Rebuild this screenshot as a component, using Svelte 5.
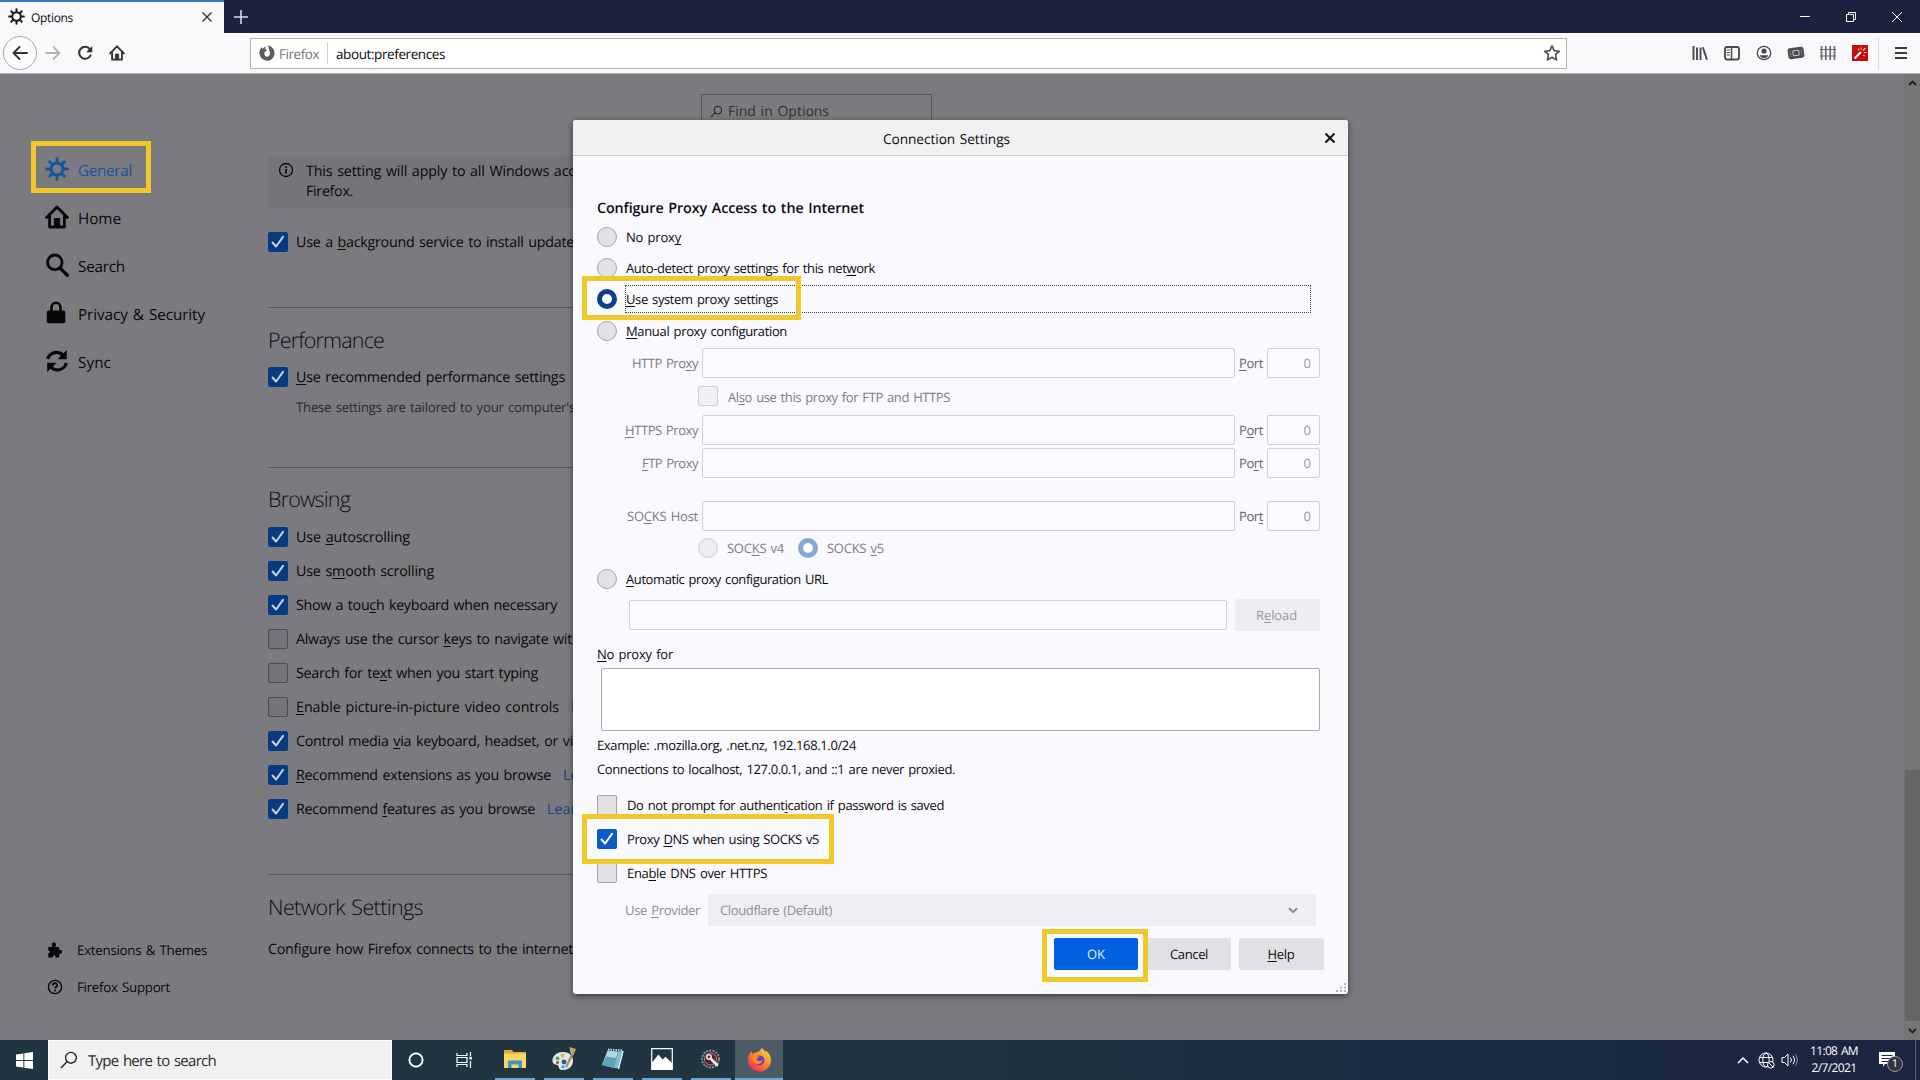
<script>
  // Labels carry a "~" in front of their access key letter.
  const split = (s) => {
    const i = s.indexOf('~');
    return i < 0 ? [s, '', ''] : [s.slice(0, i), s[i + 1], s.slice(i + 2)];
  };

  // Tracks a label so that it fills its design width exactly.
  function fit(node, width) {
    const natural = node.getBoundingClientRect().width;
    const gaps = Math.max(1, node.textContent.length);
    node.style.letterSpacing = `${(width - natural) / gaps}px`;
  }

  const nav = [
    { icon: 'gear', text: 'General', w: 54, active: true },
    { icon: 'home', text: 'Home', w: 43 },
    { icon: 'search', text: 'Search', w: 47 },
    { icon: 'lock', text: 'Privacy & Security', w: 127 },
    { icon: 'sync', text: 'Sync', w: 33 }
  ];

  const browsing = [
    { text: 'Use ~autoscrolling', w: 114, on: true },
    { text: 'Use s~mooth scrolling', w: 138, on: true },
    { text: 'Show a tou~ch keyboard when necessary', w: 261, on: true },
    { text: 'Always use the cursor ~keys to navigate wit', w: 276, on: false },
    { text: 'Search for te~xt when you start typing', w: 242, on: false },
    { text: '~Enable picture-in-picture video controls', w: 263, on: false, link: 'L' },
    { text: 'Control media ~via keyboard, headset, or vi', w: 277, on: true },
    { text: '~Recommend extensions as you browse', w: 255, on: true, link: 'Le' },
    { text: 'Recommend ~features as you browse', w: 239, on: true, link: 'Lear' }
  ];

  const apps = ['explorer', 'paint', 'notepad', 'photos', 'tool', 'firefox'];
</script>

{#snippet t(label, w)}
  {@const p = split(label)}
  <span class="t" use:fit={w}>{p[0]}{#if p[1]}<u>{p[1]}</u>{/if}{p[2]}</span>
{/snippet}

{#snippet check(on, faded = false)}
  <span class="check" class:on class:faded>
    {#if on}
      <svg viewBox="0 0 20 20" width="20" height="20"><path d="M4.5 10.5l3.6 4L15 4.8" fill="none" stroke="currentColor" stroke-width="2" stroke-linecap="round" stroke-linejoin="round" /></svg>
    {/if}
  </span>
{/snippet}

{#snippet radio(on, faded = false)}
  <span class="radio" class:on class:faded></span>
{/snippet}

{#snippet gear(size)}
  <svg width={size} height={size} viewBox="0 0 24 24" fill="none" stroke="currentColor">
    <circle cx="12" cy="12" r="6" stroke-width="2.8" />
    <g stroke-width="2.8" stroke-linecap="round">
      {#each [0, 45, 90, 135, 180, 225, 270, 315] as a}
        <path d="M12 5V1.6" transform="rotate({a} 12 12)" />
      {/each}
    </g>
  </svg>
{/snippet}

{#snippet house(size)}
  <svg width={size} height={size} viewBox="0 0 24 24" fill="none" stroke="currentColor" stroke-width="2.8" stroke-linejoin="round" stroke-linecap="round">
    <path d="M1.6 12.6L12 2l10.4 10.6M4.6 11v11h14.8V11" />
    <path d="M9.400 21v-7.500h5.200v7.500z" fill="currentColor" stroke-width="1" />
  </svg>
{/snippet}

{#snippet proxyRow(label, w, port)}
  <div class="proxy">
    <span class="plabel">{@render t(label, w)}</span>
    <span class="field grow"></span>
    <span class="port">{@render t(port, 24)}</span>
    <span class="field num">0</span>
  </div>
{/snippet}

<div class="screen">
  <header class="titlebar">
    <div class="tab">
      <span class="tabicon">{@render gear(17)}</span>
      <span class="tabtext">{@render t('Options', 42)}</span>
      <svg class="tabclose" width="12" height="12" viewBox="0 0 12 12"><path d="M1.5 1.5l9 9M10.5 1.5l-9 9" stroke="#333" stroke-width="1.4" /></svg>
    </div>
    <svg class="plus" width="14" height="14" viewBox="0 0 14 14"><path d="M7 0v14M0 7h14" stroke="#d8dae6" stroke-width="1.6" /></svg>
    <div class="winctl">
      <svg width="46" height="32" viewBox="0 0 46 32"><path d="M18 15.5h10" stroke="#fff" /></svg>
      <svg width="46" height="32" viewBox="0 0 46 32"><path d="M18.5 13.5h7v7h-7zM20.500 13.500v-2h7v7h-2" fill="none" stroke="#fff" /></svg>
      <svg width="46" height="32" viewBox="0 0 46 32"><path d="M18 11l10 10M28 11L18 21" stroke="#fff" /></svg>
    </div>
  </header>

  <div class="toolbar">
    <div class="navbtns">
      <span class="back"><svg width="16" height="16" viewBox="0 0 16 16" fill="none" stroke="#333" stroke-width="1.9" stroke-linecap="round" stroke-linejoin="round"><path d="M15 8H1.500M7.500 2L1.500 8l6 6" /></svg></span>
      <svg class="ic fwd" width="16" height="16" viewBox="0 0 16 16" fill="none" stroke="#b3b3b6" stroke-width="1.8" stroke-linecap="round" stroke-linejoin="round"><path d="M1 8h13.500M8.500 2l6 6-6 6" /></svg>
      <svg class="ic" width="16" height="16" viewBox="0 0 16 16" fill="none" stroke="#333" stroke-width="2" stroke-linecap="round"><path d="M13.500 10.500A6 6 0 1 1 12.800 4" /><path d="M15.300 1v6.300H9z" fill="#333" stroke="none" /></svg>
      <span class="ic home">{@render house(16)}</span>
    </div>
    <div class="urlbar">
      <svg width="16" height="16" viewBox="0 0 16 16"><path d="M9 .4C12.900 1 15.600 4.300 15.600 8A7.600 7.600 0 0 1 .4 8.200C.4 5.500 1.300 3.600 2.800 2L3.400 4 6.500 1.200 6.300 4.400 8.600 5.200 6.400 6.600A2.800 2.800 0 1 0 10.900 8.600C11 6.500 9.900 5.600 9.800 3.600 9.700 2.500 9.500 1.400 9 .4z" fill="#5c5c60" /></svg>
      <span class="brand">{@render t('Firefox', 40)}</span>
      <span class="usep"></span>
      <span class="url">{@render t('about:preferences', 109)}</span>
      <svg class="star" width="18" height="18" viewBox="0 0 18 18"><path d="M9 1.800l2.200 4.800 5.200.6-3.900 3.500 1.100 5.200L9 13.300l-4.600 2.600 1.100-5.200-3.900-3.500 5.200-.6z" fill="none" stroke="#4a4a4f" stroke-width="1.600" stroke-linejoin="round" /></svg>
    </div>
    <div class="tools">
      <svg width="16" height="16" viewBox="0 0 16 16" stroke="#4a4a4f" stroke-width="1.900" fill="none"><path d="M1.500 1v14M5 2.500V15M8.500 2.500V15M10.800 2.300L15 14.800" /></svg>
      <svg width="16" height="16" viewBox="0 0 16 16" stroke="#4a4a4f" fill="none"><rect x="1" y="2" width="14" height="12.500" rx="2.200" stroke-width="1.900" /><path d="M7.500 2v12" stroke-width="1.500" /><path d="M2.800 5h3M2.800 7.500h3M2.800 10h3" /></svg>
      <svg width="16" height="16" viewBox="0 0 16 16" fill="none" stroke="#4a4a4f"><circle cx="8" cy="8" r="6.700" stroke-width="1.300" /><circle cx="8" cy="6" r="2.600" fill="#4a4a4f" stroke="none" /><path d="M3.800 10.200h8.400c-.6 2-2.200 3-4.200 3s-3.600-1-4.200-3z" fill="#4a4a4f" stroke="none" /></svg>
      <svg width="18" height="16" viewBox="0 0 18 16"><g transform="rotate(-8 9 8)"><rect x="1" y="2.500" width="16" height="11" rx="2.500" fill="#4a4a4f" /><rect x="6" y="5.500" width="6" height="5" rx="1" fill="none" stroke="#c8c8cc" /><path d="M3.500 5v6M14.500 5v6" stroke="#a0a0a5" stroke-dasharray="1.500 1" /></g></svg>
      <svg width="16" height="16" viewBox="0 0 16 16" stroke="#6b6b70" fill="none"><path d="M1.500 1v14M5.800 1v14M10.200 1v14M14.500 1v14" stroke-width="1.700" /><path d="M0 4.500h16M0 11h16" stroke-width="1.200" /></svg>
      <svg width="16" height="16" viewBox="0 0 16 16"><path d="M0 0h16v16H0z" fill="#c00d0d" /><path d="M2.500 13.500l6.500-6.500" stroke="#fff" stroke-width="2.200" /><path d="M9 2.500v2M11 5.500l2.500-2.500M12 7.500h2.300M6 4l1.200 1.200M11.500 10l1 1" stroke="#ffc2c2" stroke-width="1.100" /></svg>
      <span class="tsep"></span>
      <svg class="burger" width="12" height="14" viewBox="0 0 12 14"><path d="M0 2h12M0 7h12M0 12h12" stroke="#3c3c40" stroke-width="1.800" /></svg>
    </div>
  </div>

  <div class="page">
    <aside>
      <nav>
        {#each nav as n}
          <div class="navitem" class:active={n.active}>
            <span class="navicon">
              {#if n.icon === 'gear'}{@render gear(24)}
              {:else if n.icon === 'home'}{@render house(24)}
              {:else if n.icon === 'search'}
                <svg width="24" height="24" viewBox="0 0 24 24" fill="none" stroke="currentColor"><circle cx="9.800" cy="9.300" r="7.300" stroke-width="2.800" /><path d="M15 15l7.300 7.300" stroke-width="3.400" stroke-linecap="round" /></svg>
              {:else if n.icon === 'lock'}
                <svg width="24" height="24" viewBox="0 0 24 24"><path d="M6.500 11V6.300a4.500 4.500 0 0 1 9 0V11" fill="none" stroke="currentColor" stroke-width="2.600" /><rect x="1.800" y="9.500" width="18.500" height="12.800" rx="2" fill="currentColor" /></svg>
              {:else}
                <svg width="24" height="24" viewBox="0 0 24 24" fill="none" stroke="currentColor" stroke-width="3.200"><path d="M2.700 10A9 9 0 0 1 18.500 7M21.300 14A9 9 0 0 1 5.500 17.500" /><path d="M21.800 1v9.300h-9.300zM2.200 23v-9.300h9.300z" fill="currentColor" stroke="none" /></svg>
              {/if}
            </span>
            <span class="navtext">{@render t(n.text, n.w)}</span>
          </div>
        {/each}
      </nav>
      <div class="foot">
        <div class="footitem">
          <svg width="16" height="16" viewBox="0 0 16 16"><path d="M6.800.5a2 2 0 0 1 1.800 3.200V5h3.600v3a2 2 0 1 1 0 3.400V15.500H8.500c.6-2.600-3-2.600-2.600 0H1.300V11c2.300.6 2.300-2.600 0-2.200V5h3.800V3.700A2 2 0 0 1 6.800.5z" fill="currentColor" /></svg>
          {@render t('Extensions & Themes', 130)}
        </div>
        <div class="footitem">
          <svg width="16" height="16" viewBox="0 0 16 16" fill="none" stroke="currentColor"><circle cx="8" cy="8" r="6.600" stroke-width="1.400" /><path d="M5.700 6.500c0-3 4.600-2.900 4.600-.3 0 1.600-2.200 1.600-2.200 3.300" stroke-width="1.800" /><path d="M7.200 10.700h1.900v1.700H7.200z" fill="currentColor" stroke="none" /></svg>
          {@render t('Firefox Support', 93)}
        </div>
      </div>
    </aside>

    <main>
      <div class="findrow">
        <div class="find">
          <svg width="13" height="13" viewBox="0 0 14 14" fill="none" stroke="currentColor" stroke-width="1.300"><circle cx="8.500" cy="5.500" r="4" /><path d="M5.700 8.300L1 13" /></svg>
          {@render t('Find in Options', 101)}
        </div>
      </div>
      <div class="info">
        <svg width="16" height="16" viewBox="0 0 16 16" fill="none" stroke="currentColor"><circle cx="8" cy="8" r="6.500" stroke-width="1.300" /><path d="M8 7v4.500" stroke-width="1.700" /><circle cx="8" cy="4.900" r="1" fill="currentColor" stroke="none" /></svg>
        <div class="infotext">
          <div>{@render t('This setting will apply to all Windows acc', 269)}</div>
          <div>{@render t('Firefox.', 47)}</div>
        </div>
      </div>
      <div class="opt bgservice">{@render check(true)}<span class="lab">{@render t('Use a ~background service to install update', 278)}</span></div>
      <hr class="hr1" />
      <h2>{@render t('Performance', 116)}</h2>
      <div class="opt perf">{@render check(true)}<span class="lab">{@render t('~Use recommended performance settings', 269)}</span></div>
      <div class="hint">{@render t("These settings are tailored to your computer's", 279)}</div>
      <hr class="hr2" />
      <h2 class="up1">{@render t('Browsing', 82)}</h2>
      <div class="list">
        {#each browsing as b}
          <div class="opt">
            {@render check(b.on)}<span class="lab">{@render t(b.text, b.w)}</span>
            {#if b.link}<a class="learn lab" href="#more">{b.link}</a>{/if}
          </div>
        {/each}
      </div>
      <hr class="hr3" />
      <h2>{@render t('Network Settings', 155)}</h2>
      <div class="net">{@render t('Configure how Firefox connects to the internet', 305)}</div>
    </main>

    <div class="scroll">
      <svg width="9" height="6" viewBox="0 0 9 6"><path d="M1 5l3.500-3.500L8 5" fill="none" stroke="#1c1c1c" stroke-width="1.800" /></svg>
      <span class="thumb"></span>
      <svg class="down" width="9" height="6" viewBox="0 0 9 6"><path d="M1 1l3.500 3.500L8 1" fill="none" stroke="#1c1c1c" stroke-width="1.800" /></svg>
    </div>
  </div>

  <footer class="taskbar">
    <span class="start"><svg width="17" height="17" viewBox="0 0 17 17" fill="#fff"><path d="M0 2.400l7.400-1V8H0zM8.300 1.300L17 0v8H8.300zM0 8.900h7.400v6.700L0 14.600zM8.300 8.900H17V17l-8.700-1.300z" /></svg></span>
    <div class="tsearch">
      <svg width="18" height="18" viewBox="0 0 18 18" fill="none" stroke="#222" stroke-width="1.400"><circle cx="11" cy="6.800" r="5.400" /><path d="M7.200 10.600L1 17" /></svg>
      <span class="lab">{@render t('Type here to search', 128)}</span>
    </div>
    <span class="tb"><svg width="16" height="16" viewBox="0 0 16 16"><circle cx="8" cy="8" r="6.600" fill="none" stroke="#fff" stroke-width="1.900" /></svg></span>
    <span class="tb taskview"><svg width="17" height="16" viewBox="0 0 17 16" fill="none" stroke="#fff" stroke-width="1.200"><path d="M1 1v2.500h10V1M1 15v-2.500h10V15M1 5.500h10v5H1zM14.500 0v4M14.500 9v7" /><path d="M13.300 4.800h2.600v2.700h-2.600z" fill="#fff" stroke="none" /></svg></span>
    {#each apps as a}
      <span class="app" class:current={a === 'firefox'}>
        {#if a === 'explorer'}
          <svg width="24" height="24" viewBox="0 0 24 24"><path d="M1 3h8l1.500 2H23v15H1z" fill="#e3ab2e" /><path d="M1 6.500h22V21H1z" fill="#fbd768" /><path d="M5 21v-7.500h14V21h-3.500v-3.500h-7V21z" fill="#3f96c6" /></svg>
        {:else if a === 'paint'}
          <svg width="26" height="26" viewBox="0 0 26 26"><path d="M12 6C5 6 1 11 1.500 15.500 2 19 5.500 18 7 19.500s0 4 4 4.500c7 .5 11.500-4.500 11-10C21.700 9 17.500 6 12 6z" fill="#dce9f0" /><circle cx="6.500" cy="12.500" r="2" fill="#55a943" /><circle cx="11.500" cy="9.500" r="2" fill="#e8b13a" /><circle cx="6.500" cy="16.500" r="1.600" fill="#c4453c" /><circle cx="13" cy="16" r="2.400" fill="#235a9c" /><circle cx="12" cy="21" r="1.700" fill="#4da9d9" /><path d="M22 7l-7 14" stroke="#b98a4d" stroke-width="2.200" /><path d="M18.500 1l6.500 2-2.500 6-3-1.500z" fill="#c9a06a" /></svg>
        {:else if a === 'notepad'}
          <svg width="24" height="24" viewBox="0 0 24 24"><path d="M6.500 3.500L17 4.500l-4 16.500L1 18z" fill="#a9d9e6" /><path d="M5 9.500L15.500 11l-2.500 10L1 18z" fill="#5fa3bb" /><path d="M17 4.500l5.500-.5-4.500 17.500-5-.5z" fill="#86bccd" /><path d="M22 4l-4.500 18" stroke="#eef4f6" stroke-width="1.200" /><path d="M7 2.500l14.500.8" stroke="#d7dde0" stroke-width="1.800" stroke-dasharray="1.500 1" /></svg>
        {:else if a === 'photos'}
          <svg width="22" height="22" viewBox="0 0 22 22"><path d="M.7.7h20.600v20.600H.7z" fill="none" stroke="#fff" stroke-width="1.200" /><path d="M1 21V14.500L7.500 6.500l4 5 3-2.800L21 15v6z" fill="#fff" /></svg>
        {:else if a === 'tool'}
          <svg width="22" height="22" viewBox="0 0 22 22" fill="none"><circle cx="10.500" cy="11" r="8.500" stroke="#9b8585" stroke-width="1.800" stroke-dasharray="2.200 1" /><circle cx="10.500" cy="11" r="6" fill="#5c2127" stroke="#b88" /><path d="M10.500 10.500l6.500 6.500" stroke="#f0f0f0" stroke-width="2.600" stroke-linecap="round" /><circle cx="9" cy="9" r="2.200" stroke="#e6e6e6" stroke-width="1.600" /></svg>
        {:else}
          <svg width="25" height="25" viewBox="0 0 25 25"><defs><linearGradient id="fx" x1="1" y1="0" x2="0.200" y2="1"><stop offset="0" stop-color="#ffe64a" /><stop offset=".45" stop-color="#ff9423" /><stop offset="1" stop-color="#f4255c" /></linearGradient></defs><path d="M14.500 1c2 1.300 3 2.700 3.600 4.200C18.700 5 18.600 4 18.400 3.200 22.500 6 24 9.500 24 13a11.500 11.500 0 0 1-23 .2C1 9.500 2.500 6.500 4.500 4.200L5.300 7 9 5.500C11 5 13.500 4 14.500 1z" fill="url(#fx)" /><circle cx="12.500" cy="13.500" r="5" fill="#6b3bd0" /><path d="M6 9.500c3-1.500 4 0 6.500.2-1 1.300-2.700 1.200-3 2.800 1.500 2 4.500 1.500 6.200.5-.5 4-5.200 5-8 3C5.500 14 5.200 12 6 9.500z" fill="#ff8a1e" /></svg>
        {/if}
      </span>
    {/each}
    <div class="tray">
      <svg class="up" width="12" height="8" viewBox="0 0 12 8"><path d="M1 7l5-5 5 5" fill="none" stroke="#fff" stroke-width="1.500" /></svg>
      <svg class="globe" width="17" height="17" viewBox="0 0 17 17" fill="none" stroke="#fff"><circle cx="8" cy="8" r="7" /><ellipse cx="8" cy="8" rx="3.200" ry="7" /><path d="M1.500 5.500h13M1.500 10.500h13" /><circle cx="12.800" cy="12.800" r="3.300" fill="#1b2540" /><path d="M10.500 10.500l4.600 4.600" /></svg>
      <svg class="vol" width="17" height="16" viewBox="0 0 17 16" fill="none" stroke="#fff"><path d="M1 5.500h2.500L7 2v12l-3.500-3.500H1zM9.500 5.500a4 4 0 0 1 0 5M11.800 3.800a6.500 6.500 0 0 1 0 8.400" /><path d="M14 2a9 9 0 0 1 0 12" opacity=".5" /></svg>
      <div class="clock"><div>{@render t('11:08 AM', 48)}</div><div>{@render t('2/7/2021', 45)}</div></div>
      <div class="notif">
        <svg width="16" height="18" viewBox="0 0 16 18"><path d="M0 1h16v12H6l-2 3v-3H0z" fill="#fff" /><path d="M2.500 4.500h11M2.500 7.500h11M2.500 10.500h7" stroke="#1b2540" /></svg>
        <span class="badge">1</span>
      </div>
      <span class="peek"></span>
    </div>
  </footer>

  <section class="dialog">
    <div class="dhead">
      {@render t('Connection Settings', 127)}
      <svg class="dclose" width="12" height="12" viewBox="0 0 12 12"><path d="M1.500 1.500l9 9M10.500 1.500l-9 9" stroke="#111" stroke-width="2" /></svg>
    </div>
    <div class="dbody">
      <h3>{@render t('Configure Proxy Access to the Internet', 267)}</h3>
      <div class="row r31">{@render radio(false)}{@render t('No prox~y', 55)}</div>
      <div class="row r31">{@render radio(false)}{@render t('Auto-detect proxy settings for this net~work', 249)}</div>
      <div class="row r32">{@render radio(true)}<span class="focus">{@render t('~Use system proxy settings', 152)}</span></div>
      <div class="row r32">{@render radio(false)}{@render t('~Manual proxy configuration', 161)}</div>

      <div class="manual">
        {@render proxyRow('HTTP Pro~xy', 66, '~Port')}
        <div class="also">{@render check(false, true)}<span class="lab">{@render t('Al~so use this proxy for FTP and HTTPS', 222)}</span></div>
        {@render proxyRow('~HTTPS Proxy', 73, 'P~ort')}
        <div class="gap4"></div>
        {@render proxyRow('~FTP Proxy', 56, 'Po~rt')}
        <div class="gap24"></div>
        {@render proxyRow('SO~CKS Host', 71, 'Por~t')}
        <div class="socks">
          {@render radio(false, true)}<span class="sv">{@render t('SOC~KS v4', 57)}</span>
          {@render radio(true, true)}<span class="sv">{@render t('SOCKS ~v5', 57)}</span>
        </div>
      </div>

      <div class="row r26">{@render radio(false)}{@render t('~Automatic proxy configuration URL', 202)}</div>
      <div class="auto">
        <span class="field grow"></span>
        <span class="btn off">{@render t('R~eload', 41)}</span>
      </div>
      <div class="nplabel">{@render t('~No proxy for', 76)}</div>
      <div class="textarea"></div>
      <div class="note first">{@render t('Example: .mozilla.org, .net.nz, 192.168.1.0/24', 259)}</div>
      <div class="note">{@render t('Connections to localhost, 127.0.0.1, and ::1 are never proxied.', 358)}</div>
      <div class="checks">
        <div class="row r34">{@render check(false)}{@render t('Do not prompt for authent~ication if password is saved', 317)}</div>
        <div class="row r34">{@render check(true)}{@render t('Proxy ~DNS when using SOCKS v5', 192)}</div>
        <div class="row r34">{@render check(false)}{@render t('Ena~ble DNS over HTTPS', 140)}</div>
      </div>
      <div class="provider">
        {@render t('Use ~Provider', 75)}
        <div class="select">
          {@render t('Cloudflare (Default)', 112)}
          <svg width="10" height="7" viewBox="0 0 10 7"><path d="M1 1.200l4 4 4-4" fill="none" stroke="#88888d" stroke-width="2" /></svg>
        </div>
      </div>
      <div class="buttons">
        <span class="btn ok">{@render t('OK', 18)}</span>
        <span class="btn cancel">{@render t('Cancel', 38)}</span>
        <span class="btn help">{@render t('~Help', 27)}</span>
      </div>
    </div>
    <svg class="grip" width="10" height="9" viewBox="0 0 10 9" fill="#b4b4b8"><path d="M8 0h2v2H8zM4 3.500h2v2H4zM8 3.500h2v2H8zM0 7h2v2H0zM4 7h2v2H4zM8 7h2v2H8z" /></svg>
  </section>

  <span class="mark m-general"></span>
  <span class="mark m-system"></span>
  <span class="mark m-dns"></span>
  <span class="mark m-ok"></span>
</div>

<style>
  :global(body) { margin: 0; overflow: hidden; }
  .screen, .screen * { box-sizing: border-box; }
  .screen {
    position: relative;
    width: 1920px;
    height: 1080px;
    display: flex;
    flex-direction: column;
    overflow: hidden;
    font-family: "Open Sans", "Noto Sans", sans-serif;
    font-size: 13px;
    color: #0c0c0d;
    word-spacing: 1.2px;
    text-rendering: geometricPrecision;
  }
  svg { display: block; flex: none; }
  .t { display: inline-block; white-space: nowrap; flex: none; }
  .lab { padding-top: 1px; }
  u { text-underline-offset: 2px; text-decoration-thickness: 1px; text-decoration-skip-ink: none; }

  .titlebar { height: 33px; background: #1d2140; display: flex; align-items: center; flex: none; }
  .tab { width: 224px; height: 33px; background: #f9f9fb; border-top: 2px solid #2b7fcd; display: flex; align-items: center; padding: 0 11px 2px 8px; }
  .tabicon { color: #1a1a1a; }
  .tabtext { margin-left: 6px; font-size: 12px; flex: 1; padding-top: 2px; }
  .plus { margin-left: 10px; }
  .winctl { margin-left: auto; display: flex; }

  .toolbar { height: 41px; flex: none; background: #f9f9fb; border-bottom: 1px solid #b4b4b8; display: flex; align-items: center; }
  .navbtns { display: flex; align-items: center; width: 250px; padding-left: 3px; color: #333; }
  .back { width: 34px; height: 34px; border: 1px solid #a9a9ad; border-radius: 50%; display: flex; align-items: center; justify-content: center; background: #fcfcfd; }
  .fwd { margin-left: 8px; }
  .ic + .ic { margin-left: 16px; }
  .urlbar { width: 1317px; height: 31px; border: 1px solid #b5b5ae; background: #fff; display: flex; align-items: center; padding: 0 5px 0 8px; font-size: 13.5px; }
  .brand { margin-left: 4px; color: #76767a; padding-top: 2px; }
  .usep { width: 1px; height: 22px; background: #d0d0d3; margin: 0 8px; }
  .url { flex: 1; padding-top: 2px; }
  .tools { flex: 1; display: flex; align-items: center; padding-left: 125px; gap: 16px; }
  .tools svg:nth-child(4) { margin: 0 -1px; }
  .tsep { width: 1px; height: 33px; background: #dcdcdf; margin-left: -6px; }

  .page { flex: 1; background: #7b7b7f; display: flex; overflow: hidden; color: #08080a; min-height: 0; }
  aside { width: 268px; display: flex; flex-direction: column; justify-content: space-between; padding: 71px 0 35px 45px; }
  .navitem { height: 48px; display: flex; align-items: center; gap: 9px; font-size: 15.3px; color: #08080a; }
  .navicon { padding-bottom: 1px; }
  .navtext { padding-top: 3px; }
  .active { color: #14549a; }
  .footitem { height: 37px; display: flex; align-items: center; gap: 14px; font-size: 13.3px; padding-left: 2px; }

  main { flex: 1; display: flex; flex-direction: column; font-size: 14.300px; min-width: 0; }
  .findrow { padding: 20px 0 0 433px; height: 82px; }
  .find { width: 231px; height: 33px; border: 1px solid #58585c; display: flex; align-items: center; gap: 5px; padding: 2px 0 0 8px; color: #2f2f33; font-size: 14px; }
  .info { height: 52px; width: 660px; background: #757579; display: flex; padding: 6px 10px; gap: 12px; line-height: 20px; }
  .infotext div { height: 20px; }
  .opt { display: flex; align-items: center; height: 34px; gap: 8px; flex: none; }
  .bgservice { margin-top: 17px; }
  hr { border: 0; height: 1px; background: #59595d; width: 660px; margin: 0; flex: none; }
  .hr1 { margin-top: 48px; }
  .hr2 { margin-top: 49px; }
  .hr3 { margin-top: 48px; }
  h2 { margin: 17px 0 0; height: 32px; line-height: 32px; font-weight: 300; font-size: 21.5px; flex: none; color: #0c0c0e; }
  h2.up1 { margin: 16px 0 1px; }
  .perf { margin-top: 3px; }
  .hint { padding-left: 28px; height: 24px; line-height: 26px; font-size: 13.200px; color: #29292d; }
  .list { margin-top: 3px; }
  .learn { color: #14467c; text-decoration: none; margin-left: 4px; white-space: nowrap; }
  .net { margin-top: 15px; height: 20px; line-height: 22px; }

  .check { width: 20px; height: 20px; border: 1px solid #4c4c50; border-radius: 2px; background: #757579; flex: none; color: #c8d2e2; }
  .check.on { border: 0; background: #093a80; }
  .dialog .check { background: #e2e2e6; border-color: #a5a5a9; }
  .dialog .check.on { background: #0a5bc8; color: #fff; }
  .dialog .check.faded { background: #f0f0f4; border-color: #d0d0d4; }

  .scroll { width: 16px; background: #767678; border-left: 1px solid #727274; display: flex; flex-direction: column; align-items: center; padding: 6px 0 5px; }
  .thumb { width: 15px; height: 251px; background: #656567; margin: 684px 0 7px; }

  .taskbar { height: 40px; flex: none; display: flex; align-items: center; background: linear-gradient(90deg, #20353f 0, #20353f 45%, #1b2a42 75%, #1b2540 100%); }
  .start { width: 48px; padding-left: 16px; }
  .tsearch { width: 344px; height: 40px; background: #f1f1f2; border: 1px solid #fdfdfd; display: flex; align-items: center; gap: 10px; padding-left: 11px; color: #2b2b2b; font-size: 15px; }
  .tb { width: 48px; display: flex; justify-content: center; }
  .taskview { margin-right: 2px; }
  .app { width: 40px; height: 40px; margin: 0 4px 0 5px; display: flex; align-items: center; justify-content: center; border-bottom: 2px solid #72a6d4; }
  .app.current { width: 48px; margin: 0; background: #4c5c66; }
  .tray { margin-left: auto; display: flex; align-items: center; height: 40px; color: #fff; }
  .globe { margin-left: 9px; }
  .vol { margin-left: 6px; }
  .clock { margin-left: 6px; width: 60px; text-align: center; font-size: 12px; line-height: 17px; padding-bottom: 2px; }
  .notif { position: relative; margin-left: 15px; width: 36px; padding-bottom: 1px; }
  .badge { position: absolute; left: 8px; top: 5px; width: 16px; height: 16px; border: 1px solid #9a9aa2; border-radius: 50%; background: #30343f; font-size: 11px; line-height: 14px; text-align: center; }
  .peek { width: 1px; height: 40px; background: #55607a; margin-right: 4px; }

  .dialog { position: absolute; left: 573px; top: 120px; width: 775px; height: 874px; background: #f9f9fe; border-radius: 3px; box-shadow: 0 2px 6px rgba(0, 0, 0, .55); overflow: hidden; }
  .dhead { height: 36px; background: #f1f1f2; border-bottom: 1px solid #cdcdd0; display: flex; align-items: center; padding: 4px 12px 0 310px; font-size: 13.700px; }
  .dclose { margin-left: auto; margin-top: -3px; }
  .dbody { padding: 39px 28px 0 24px; display: flex; flex-direction: column; }
  h3 { margin: 0; height: 26px; line-height: 28px; font-size: 14.300px; font-weight: 600; }
  .row { display: flex; align-items: center; gap: 9px; }
  .checks .row { gap: 10px; }
  .r31 { height: 31px; }
  .r32 { height: 32px; }
  .r34 { height: 34px; }
  .r26 { height: 26px; }
  .radio { width: 20px; height: 20px; border-radius: 50%; border: 1px solid #a5a5a9; background: #e2e2e6; flex: none; }
  .radio.on { border: 5px solid #0a3f8c; background: #fff; }
  .radio.faded { border-color: #cfcfd3; background: #eeeef2; }
  .radio.on.faded { border-color: #84a9d8; background: #fff; }
  .focus { width: 686px; height: 28px; border: 1px dotted #444; margin-left: -1px; display: flex; align-items: center; flex: none; }
  .manual { color: #7c7c81; margin-top: 1px; }
  .proxy { display: flex; align-items: center; height: 29px; }
  .plabel { width: 101px; display: flex; justify-content: flex-end; margin-right: 4px; }
  .field { height: 30px; border: 1px solid #d2d2d6; border-radius: 2px; background: #fbfbff; }
  .grow { flex: 1; }
  .port { width: 32px; padding-left: 4px; color: #66666b; }
  .num { width: 53px; text-align: right; line-height: 28px; padding-right: 8px; color: #98989d; }
  .also { height: 38px; display: flex; align-items: center; gap: 10px; padding-left: 101px; }
  .gap4 { height: 4px; }
  .gap24 { height: 24px; }
  .socks { height: 36px; display: flex; align-items: center; padding-left: 101px; }
  .sv { width: 80px; padding-left: 9px; flex: none; }
  .auto { margin-top: 7px; height: 32px; display: flex; align-items: center; gap: 8px; padding-left: 32px; }
  .btn { width: 84px; height: 32px; background: #e1e1e5; border-radius: 2px; display: flex; align-items: center; justify-content: center; flex: none; }
  .btn.off { width: 85px; background: #eeeef2; color: #98989d; padding-right: 2px; }
  .btn.ok { background: #0060df; color: #e6f0ff; }
  .btn.help { width: 85px; padding-right: 1px; }
  .nplabel { margin-top: 9px; height: 28px; line-height: 28px; }
  .textarea { margin-left: 4px; height: 63px; border: 1px solid #a9a9ac; border-radius: 2px; background: #fff; }
  .note { height: 24px; line-height: 24px; }
  .first { margin-top: 2px; }
  .checks { margin-top: 7px; }
  .provider { height: 40px; display: flex; align-items: center; gap: 8px; padding-left: 28px; color: #8c8c91; }
  .select { width: 608px; height: 32px; background: #efeff3; display: flex; align-items: center; justify-content: space-between; padding: 0 18px 0 12px; flex: none; }
  .buttons { margin: 8px -4px 0 0; display: flex; justify-content: flex-end; gap: 8px; }
  .btn.ok { margin-right: 1px; }
  .grip { position: absolute; right: 2px; bottom: 2px; }

  .mark { position: absolute; border: 5px solid #f1c829; }
  .m-general { left: 31px; top: 141px; width: 120px; height: 52px; }
  .m-system { left: 582px; top: 276px; width: 219px; height: 44px; }
  .m-dns { left: 582px; top: 814px; width: 252px; height: 50px; }
  .m-ok { left: 1042px; top: 929px; width: 106px; height: 53px; }
</style>
